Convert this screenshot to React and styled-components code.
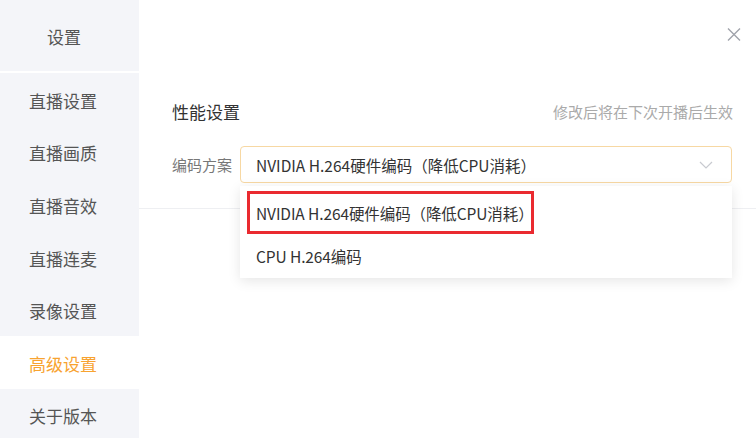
import React from "react";
import styled, { createGlobalStyle } from "styled-components";

const Global = createGlobalStyle`
  html, body { margin: 0; padding: 0; background: #fff; }
  body { font-family: "Noto Sans CJK SC", "Noto Sans", sans-serif; }
  * { box-sizing: border-box; }
`;

const Page = styled.div`
  display: flex;
  width: 756px;
  height: 438px;
  overflow: hidden;
  background: #fff;
`;

const Sidebar = styled.nav`
  width: 139px;
  flex: none;
  display: flex;
  flex-direction: column;
  gap: 2px;
  background: #fff;
  overflow: hidden;
`;

const SideHeader = styled.div`
  height: 71px;
  flex: none;
  background: #f4f5f9;
  display: flex;
  align-items: center;
  padding: 1px 0 0 47px;
  font-size: 17px;
  color: #555;
`;

const SideList = styled.div`
  flex: none;
  display: flex;
  flex-direction: column;
  background: #f4f5f9;
`;

const SideItem = styled.div`
  height: 52.6px;
  flex: none;
  display: flex;
  align-items: center;
  padding: 2px 0 0 29px;
  font-size: 17px;
  color: ${(p) => (p.$active ? "#f8a330" : "#555")};
  background: ${(p) => (p.$active ? "#fff" : "transparent")};
`;

const Main = styled.main`
  flex: 1;
  display: flex;
  flex-direction: column;
`;

const TopBar = styled.div`
  height: 68px;
  flex: none;
  display: flex;
  justify-content: flex-end;
  align-items: center;
  padding-right: 15px;
`;

const CloseBtn = styled.div`
  width: 14px;
  height: 13px;
  display: flex;
  color: #a0a3ab;
`;

const Section = styled.section`
  padding: 32px 24px 25px 33px;
  border-bottom: 1px solid #eeeff2;
  display: flex;
  flex-direction: column;
  gap: 24px;
`;

const SectionHead = styled.div`
  display: flex;
  justify-content: space-between;
  align-items: center;
  height: 22px;
`;

const Title = styled.div`
  font-size: 17px;
  color: #333;
`;

const Hint = styled.div`
  font-size: 15px;
  color: #aaa;
  margin-right: -1px;
`;

const Row = styled.div`
  display: flex;
  align-items: center;
  gap: 7px;
`;

const Label = styled.div`
  font-size: 15px;
  color: #777;
  width: 61px;
`;

const SelectWrap = styled.div`
  flex: 1;
  position: relative;
`;

const SelectBox = styled.div`
  height: 37px;
  border: 1px solid #f7d8a3;
  border-radius: 4px;
  display: flex;
  align-items: center;
  justify-content: space-between;
  padding: 0 18px 0 15px;
  font-size: 15.5px;
  color: #333;
`;

const Chevron = styled.div`
  display: flex;
  color: #c8cad0;
`;

const Menu = styled.div`
  position: absolute;
  top: 40px;
  left: 0;
  right: 0;
  background: #fff;
  box-shadow: 0 3px 12px rgba(0, 0, 0, 0.1);
  padding: 5px 0 1px;
  z-index: 2;
  display: flex;
  flex-direction: column;
  align-items: flex-start;
`;

const Option = styled.div`
  height: 43px;
  display: flex;
  align-items: center;
  font-size: 15.5px;
  letter-spacing: -0.1px;
  color: #333;
  margin-left: 7px;
  padding: 0 0 0 9px;
  outline: ${(p) => (p.$marked ? "3px solid #ea2a30" : "none")};
  outline-offset: -3px;
  white-space: nowrap;
`;

const items = ["直播设置", "直播画质", "直播音效", "直播连麦", "录像设置", "高级设置", "关于版本"];

export default function App() {
  return (
    <Page>
      <Global />
      <Sidebar>
        <SideHeader>设置</SideHeader>
        <SideList>
          {items.map((t) => (
            <SideItem key={t} $active={t === "高级设置"}>
              {t}
            </SideItem>
          ))}
        </SideList>
      </Sidebar>
      <Main>
        <TopBar>
          <CloseBtn>
            <svg width="14" height="13" viewBox="0 0 14 13" fill="none" stroke="currentColor" strokeWidth="1.4">
              <path d="M1 0.5L13 12.5M13 0.5L1 12.5" />
            </svg>
          </CloseBtn>
        </TopBar>
        <Section>
          <SectionHead>
            <Title>性能设置</Title>
            <Hint>修改后将在下次开播后生效</Hint>
          </SectionHead>
          <Row>
            <Label>编码方案</Label>
            <SelectWrap>
              <SelectBox>
                <span>NVIDIA H.264硬件编码（降低CPU消耗）</span>
                <Chevron>
                  <svg width="14" height="8" viewBox="0 0 14 8" fill="none" stroke="currentColor" strokeWidth="1.2">
                    <path d="M1 1L7 7L13 1" />
                  </svg>
                </Chevron>
              </SelectBox>
              <Menu>
                <Option $marked>NVIDIA H.264硬件编码（降低CPU消耗）</Option>
                <Option>CPU H.264编码</Option>
              </Menu>
            </SelectWrap>
          </Row>
        </Section>
      </Main>
    </Page>
  );
}
